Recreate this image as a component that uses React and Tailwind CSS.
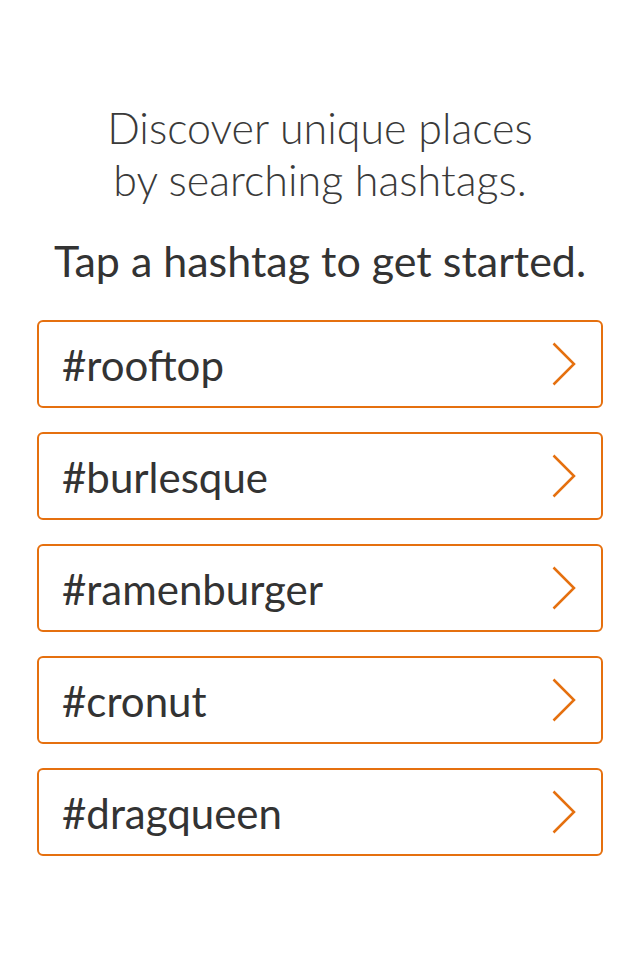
import React from 'react'

const tags = ['#rooftop', '#burlesque', '#ramenburger', '#cronut', '#dragqueen']

function Chevron() {
  return (
    <svg className="w-[24px] h-[44px]" viewBox="0 0 24 44" fill="none">
      <path d="M1.5 1.5 L22 22 L1.5 42.5" stroke="#e5700f" strokeWidth="2.5" strokeLinejoin="miter" />
    </svg>
  )
}

export default function App() {
  return (
    <div className="w-[640px] h-[960px] bg-white text-[#333333] flex flex-col items-center" style={{ fontFamily: 'Lato, "Open Sans", sans-serif' }}>
      <div className="mt-[102px] text-center text-[43px] leading-[52px] font-light text-[#3a3a3a]">
        <p>Discover unique places</p>
        <p>by searching hashtags.</p>
      </div>
      <p className="mt-[29px] text-[43px] leading-[52px] text-[#333333]">Tap a hashtag to get started.</p>
      <div className="mt-[33px] w-[566px] flex flex-col gap-[24px]">
        {tags.map((tag) => (
          <button
            key={tag}
            className="h-[88px] w-full border-2 border-[#e5700f] rounded-[6px] flex items-center justify-between pl-[23px] pr-[25px]"
          >
            <span className="text-[42px] leading-none text-[#333333] mt-[2px]">{tag}</span>
            <Chevron />
          </button>
        ))}
      </div>
    </div>
  )
}
